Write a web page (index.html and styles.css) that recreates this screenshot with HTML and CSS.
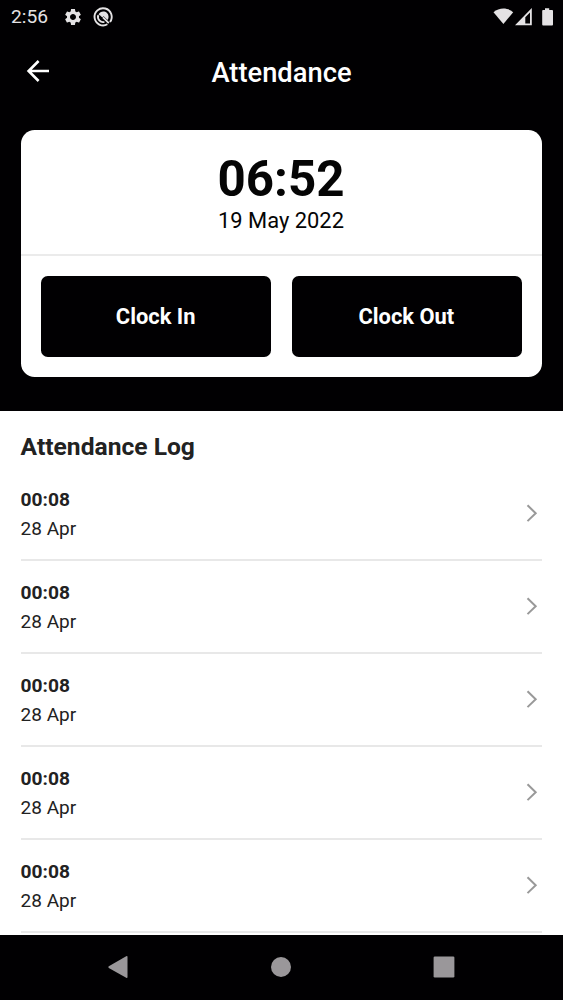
FILE: index.html
```html
<!DOCTYPE html>
<html lang="en">
<head>
<meta charset="utf-8">
<title>Attendance</title>
<link rel="stylesheet" href="styles.css">
</head>
<body>
<div class="screen">
  <section class="hero">
    <div class="status">
      <span class="status-time">2:56</span>
      <svg class="gear" viewBox="0 0 24 24"><path d="M19.14 12.94c.04-.3.06-.61.06-.94 0-.32-.02-.64-.07-.94l2.03-1.58c.18-.14.23-.41.12-.61l-1.92-3.32c-.12-.22-.37-.29-.59-.22l-2.39.96c-.5-.38-1.03-.7-1.62-.94l-.36-2.54c-.04-.24-.24-.41-.48-.41h-3.84c-.24 0-.43.17-.47.41l-.36 2.54c-.59.24-1.13.57-1.62.94l-2.39-.96c-.22-.08-.47 0-.59.22L2.74 8.87c-.12.21-.08.47.12.61l2.03 1.58c-.05.3-.09.63-.09.94s.02.64.07.94l-2.03 1.58c-.18.14-.23.41-.12.61l1.92 3.32c.12.22.37.29.59.22l2.39-.96c.5.38 1.03.7 1.62.94l.36 2.54c.05.24.24.41.48.41h3.84c.24 0 .44-.17.47-.41l.36-2.54c.59-.24 1.13-.56 1.62-.94l2.39.96c.22.08.47 0 .59-.22l1.92-3.32c.12-.22.07-.47-.12-.61l-2.01-1.58zM12 15.6c-1.98 0-3.6-1.62-3.6-3.6s1.62-3.6 3.6-3.6 3.6 1.62 3.6 3.6-1.62 3.6-3.6 3.6z"/></svg>
      <svg class="debug" viewBox="0 0 20 20"><path class="ring" d="M14.4 17.3A8.6 8.6 0 1 1 17 15"/><path class="ring" d="M11.4 14.9A5.1 5.1 0 0 1 5.3 8.2"/><path class="fill" d="M5.5 7.4C7 4.4 11.4 3.5 14 6.1 15.9 8 16.1 10.9 14.6 13.1L10.6 9.2 9.3 10.6 7.2 8.6z"/><path class="ring" d="M10 10.4L15.8 16.2"/></svg>
      <svg class="signals" viewBox="0 0 62 20"><path d="M.5 4.2C6.2-.7 14.7-.7 20.2 4.2L10.4 16z"/><path fill-rule="evenodd" d="M38.8 0V17.2H22zM32.3 9.3V15.4H37V4.6z"/><path d="M49 2.1h3V.2h4.2v1.9h3q.8 0 .8.8v13.7q0 .9-.9.9h-9q-.9 0-.9-.9V2.9q0-.8.8-.8z"/></svg>
    </div>
    <header class="bar">
      <svg class="back" viewBox="0 0 24 24"><path d="M23 12H2.5M12.6 2L2.6 12l10 10"/></svg>
      <h1>Attendance</h1>
    </header>
    <div class="card">
      <div class="now"><div class="clock">06:52</div><div class="today">19 May 2022</div></div>
      <div class="actions"><button>Clock In</button><button>Clock Out</button></div>
    </div>
  </section>
  <main class="log">
    <h2>Attendance Log</h2>
    <ul>
      <li><div><b>00:08</b><span>28 Apr</span></div><svg class="chev" viewBox="0 0 12 18"><path d="M1.5 1.3L9.7 9.2 1.5 17.1"/></svg></li>
      <li><div><b>00:08</b><span>28 Apr</span></div><svg class="chev" viewBox="0 0 12 18"><path d="M1.5 1.3L9.7 9.2 1.5 17.1"/></svg></li>
      <li><div><b>00:08</b><span>28 Apr</span></div><svg class="chev" viewBox="0 0 12 18"><path d="M1.5 1.3L9.7 9.2 1.5 17.1"/></svg></li>
      <li><div><b>00:08</b><span>28 Apr</span></div><svg class="chev" viewBox="0 0 12 18"><path d="M1.5 1.3L9.7 9.2 1.5 17.1"/></svg></li>
      <li><div><b>00:08</b><span>28 Apr</span></div><svg class="chev" viewBox="0 0 12 18"><path d="M1.5 1.3L9.7 9.2 1.5 17.1"/></svg></li>
    </ul>
  </main>
  <nav class="nav">
    <svg viewBox="0 0 22 24"><path d="M19.2 1.2Q20.5.5 20.5 2V22Q20.5 23.5 19.2 22.8L1.8 13Q.7 12 1.8 11.2z"/></svg>
    <svg viewBox="0 0 22 24"><circle cx="11" cy="12" r="10"/></svg>
    <svg viewBox="0 0 22 24"><rect x=".6" y="1.6" width="20.8" height="20.8" rx="1.2"/></svg>
  </nav>
</div>
</body>
</html>
```
FILE: styles.css
```css
* { box-sizing: border-box; margin: 0; padding: 0; }
body { font-family: Roboto, sans-serif; background: #fff; color: #222; }
svg { display: block; flex: none; overflow: visible; }
.screen { width: 563px; height: 1000px; overflow: hidden; display: flex; flex-direction: column; }
.hero { background: #010002; height: 411.4px; flex: none; }
.status { height: 34px; display: flex; align-items: center; padding: 0 11px; color: #e4e2e4; fill: #e4e2e4; }
.status-time { font-size: 19.2px; width: 52px; line-height: 34px; }
.gear { width: 20px; height: 20px; margin-right: 10px; }
.debug { width: 20px; height: 20px; }
.debug .ring { fill: none; stroke: #e4e2e4; stroke-width: 1.9; }
.signals { width: 62px; height: 20px; margin-left: auto; margin-right: -2.5px; margin-top: 2px; }
.bar { height: 75px; display: grid; grid-template-columns: 46px 1fr 46px; align-items: center; padding: 0 10px; }
.back { width: 24px; height: 24px; margin: -1px 0 0 16px; }
.back path { fill: none; stroke: #fff; stroke-width: 2.6; }
h1 { color: #fff; font-size: 27.3px; font-weight: 500; text-align: center; padding-top: 2px; }
.card { margin: 20.7px 20.6px 0; height: 247.7px; background: #fff; border-radius: 13.7px; color: #050505; }
.now { height: 126px; border-bottom: 2px solid #ebebeb; text-align: center; padding: 20px 1px 0 0; }
.clock { font-size: 49.3px; line-height: 58px; font-weight: 700; }
.today { font-size: 21.9px; line-height: 26px; }
.actions { display: flex; gap: 20.5px; padding: 20.5px; }
button { flex: 1; height: 80.6px; border: 0; border-radius: 6.8px; padding-right: 1px; background: #010002; color: #fff; font: 700 21.9px Roboto, sans-serif; }
.log { flex: 1; min-height: 0; overflow: hidden; padding: 21px 20.6px 0; }
h2 { font-size: 24.6px; line-height: 30px; font-weight: 700; }
ul { list-style: none; padding-top: 5.7px; }
li { height: 93.05px; border-bottom: 2px solid #e8e8e8; display: flex; justify-content: space-between; align-items: center; }
b, li span { display: block; font-size: 19.2px; line-height: 29px; }
li span { font-size: 19px; }
.chev { width: 12px; height: 18px; margin: -1px 4px 0 0; }
.chev path { fill: none; stroke: #999; stroke-width: 2; }
.nav { flex: none; height: 65.5px; background: #010002; display: flex; justify-content: space-between; align-items: center; padding: 0 108.5px 0 107px; fill: #9a979a; }
.nav svg { width: 22px; height: 24px; }
```
